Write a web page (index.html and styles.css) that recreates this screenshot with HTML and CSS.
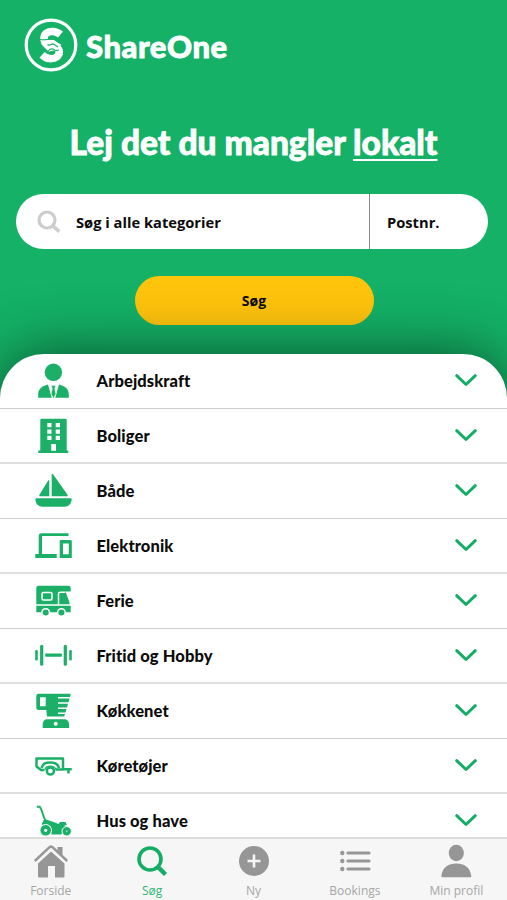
FILE: index.html
```html
<!DOCTYPE html>
<html lang="da">
<head>
  <meta charset="UTF-8">
  <meta name="viewport" content="width=device-width, initial-scale=1.0">
  <title>ShareOne</title>
  <link rel="stylesheet" href="styles.css">
</head>

<body>
  <header class="hero">
    <div class="logo">
      <svg class="logo-mark" viewBox="0 0 54 54">
        <circle cx="27" cy="27" r="24.8" fill="none" stroke="#fff" stroke-width="3.2"/>
        <path d="M36.500 16.500C32 12.800 25.500 12.500 22 15.500C19 18.500 19.500 22.500 22.500 24.500C27 27.500 34.500 28 35.300 33.500C35.500 38.500 31 40.700 27 40.700C23.500 40.700 20.500 39 18 36.800" fill="none" stroke="#fff" stroke-width="7.600"/>
        <path d="M16.500 22L30 21.500L37 26.500L36 31.500L29 32.500L24 34L18 28.500Z" fill="#fff"/>
        <path d="M15.500 21.500C21 22.500 26 20.500 30 21.500C33 22.500 33.500 25 38 26" fill="none" stroke="#14b166" stroke-width="1.100"/>
        <path d="M17 27C20 29.500 21.500 32 24 33.500C26 30 29 30.500 31.500 32.500L35 32M23.500 26.500C25.500 28.500 27.500 25.500 29.500 26L34 29" fill="none" stroke="#14b166" stroke-width="1.200"/>
      </svg>
      <span class="logo-text">ShareOne</span>
    </div>

    <h1>Lej det du mangler <span class="underline">lokalt</span></h1>

    <div class="search">
      <div class="search-what">
        <svg class="search-icon" viewBox="0 0 24 24">
          <circle cx="10" cy="10" r="8" fill="none" stroke="#ccc" stroke-width="3.2"/>
          <path d="M16 16L22.300 21.700" stroke="#ccc" stroke-width="3.600"/>
        </svg>
        <span>Søg i alle kategorier</span>
      </div>
      <div class="search-zip">Postnr.</div>
    </div>

    <button class="search-btn">Søg</button>
  </header>

  <main class="sheet">
    <div class="row">
      <svg class="icon" viewBox="0 0 40 40">
        <circle cx="19.400" cy="11.300" r="8.700"/>
        <path d="M4.200 36.800V33.500C4.200 28 8 25 14 23.500L17.800 36.800ZM34.800 36.800V33.500C34.800 28 31 25 25 23.500L21.200 36.800Z"/>
        <path d="M17 24.300H22L20.800 27.500L22 33L19.500 37.500L17 33L18.200 27.500Z" stroke="#fff" stroke-width=".7"/>
      </svg>
      <span class="name">Arbejdskraft</span>
      <svg class="chevron" viewBox="0 0 24 14"><path d="M2.700 2.700L12 11.500L21.300 2.700"/></svg>
    </div>
    <div class="row">
      <svg class="icon" viewBox="0 0 40 40">
        <path fill-rule="evenodd" d="M7.500 2.700H31.500Q32.700 2.700 32.700 4V34.500H34.300V37H4.300V34.500H6.300V4Q6.300 2.700 7.500 2.700ZM13.300 7V11.300H17.500V7ZM21.700 7V11.300H26V7ZM13.300 13.400V17.700H17.500V13.400ZM21.700 13.400V17.700H26V13.400ZM13.300 19.800V24.100H17.500V19.800ZM21.700 19.800V24.100H26V19.800ZM17.200 28V34.700H22V28Z"/>
      </svg>
      <span class="name">Boliger</span>
      <svg class="chevron" viewBox="0 0 24 14"><path d="M2.700 2.700L12 11.500L21.300 2.700"/></svg>
    </div>
    <div class="row">
      <svg class="icon" viewBox="0 0 40 40">
        <path d="M17.700 3.200Q18.200 2.200 19 3.200L33.700 24Q34 25.300 33 25.300H17.700ZM15.300 9.500V25.300H6Q4.800 25.300 5.300 24L14.300 9.300ZM2.300 27.300H36.700Q38 27.300 37.700 29Q36.500 35.700 30.500 35.700H8.500Q2.500 35.700 1.300 29Q1.200 27.300 2.300 27.300Z"/>
      </svg>
      <span class="name">Både</span>
      <svg class="chevron" viewBox="0 0 24 14"><path d="M2.700 2.700L12 11.500L21.300 2.700"/></svg>
    </div>
    <div class="row">
      <svg class="icon" viewBox="0 0 40 40">
        <path d="M34.500 7.300V10H8V28H22.700V32H1.300V28H4.700V10Q4.700 7.300 7.500 7.300Z"/>
        <path fill-rule="evenodd" d="M27 14H36.500Q37.800 14 37.800 15.300V32H25.700V15.300Q25.700 14 27 14ZM29 17.500V28.300H34.800V17.500Z"/>
      </svg>
      <span class="name">Elektronik</span>
      <svg class="chevron" viewBox="0 0 24 14"><path d="M2.700 2.700L12 11.500L21.300 2.700"/></svg>
    </div>
    <div class="row">
      <svg class="icon" viewBox="0 0 40 40">
        <path d="M4.300 4.700H34.500Q36.700 4.700 36.700 7.500V10.500H31.500L35.500 21.500V23.300H2.300V6.700Q2.300 4.700 4.300 4.700ZM2.300 24.700H36.700V31.300H2.300Z"/>
        <rect x="8" y="11.500" width="10" height="7.500" rx="1.500" fill="none" stroke="#fff" stroke-width="1.500"/>
        <path d="M24.500 23.500V13Q24.500 11.200 26.500 11.200H31.500" fill="none" stroke="#fff" stroke-width="1.500"/>
        <g stroke="#fff" stroke-width="1.600"><circle cx="11.700" cy="31.500" r="3.800"/><circle cx="27.400" cy="31.500" r="3.800"/></g>
      </svg>
      <span class="name">Ferie</span>
      <svg class="chevron" viewBox="0 0 24 14"><path d="M2.700 2.700L12 11.500L21.300 2.700"/></svg>
    </div>
    <div class="row">
      <svg class="icon" viewBox="0 0 40 40">
        <rect x="1.200" y="14" width="2.600" height="10.500" rx="1.200"/>
        <rect x="6.100" y="8.700" width="3.200" height="21" rx="1.500"/>
        <rect x="11.200" y="17.500" width="16.600" height="3.300" rx=".8"/>
        <rect x="29.700" y="8.700" width="3.200" height="21" rx="1.500"/>
        <rect x="35.200" y="14" width="2.600" height="10.500" rx="1.200"/>
      </svg>
      <span class="name">Fritid og Hobby</span>
      <svg class="chevron" viewBox="0 0 24 14"><path d="M2.700 2.700L12 11.500L21.300 2.700"/></svg>
    </div>
    <div class="row">
      <svg class="icon" viewBox="0 0 40 40">
        <path fill-rule="evenodd" d="M4.500 2.800H36.700L36 6H24V7.500H35.500L34.500 11.300H24V12.800H34L33 16.500H24V18H32.500L31.500 21.500H24V23H31L30.300 25.500H13L12.300 19H5Q2.300 19 2.300 16.500V5Q2.300 2.800 4.500 2.800ZM6 6.300V15.300H11.700V6.300Z"/>
        <path fill-rule="evenodd" d="M12.500 28.300H31Q35 29 35 33.500V37H8.700V33.500Q8.700 29 12.500 28.300ZM21.700 30.700A2 2 0 1 0 21.700 34.700A2 2 0 1 0 21.700 30.700Z"/>
      </svg>
      <span class="name">Køkkenet</span>
      <svg class="chevron" viewBox="0 0 24 14"><path d="M2.700 2.700L12 11.500L21.300 2.700"/></svg>
    </div>
    <div class="row">
      <svg class="icon" viewBox="0 0 40 40">
        <g fill="none" stroke="#1caf68" stroke-width="2.500" stroke-linejoin="round">
          <path d="M10.500 24H7L2.500 20.500V12.500H29V23.500H21.500M29 23.300H37.700M34.500 23.500V27.500"/>
          <path d="M7.500 22C9 17 12 16.500 16.300 16.500C20.500 16.500 24 17.500 25 22"/>
          <circle cx="16.400" cy="25" r="3.600"/>
          <path d="M11 23.500C12 19 20.500 19 21.800 23.500" stroke-width="1.400"/>
        </g>
      </svg>
      <span class="name">Køretøjer</span>
      <svg class="chevron" viewBox="0 0 24 14"><path d="M2.700 2.700L12 11.500L21.300 2.700"/></svg>
    </div>
    <div class="row">
      <svg class="icon" viewBox="0 0 40 40">
        <path d="M2.800 5.700H5.700L7 8L11 19L9.500 22" fill="none" stroke="#1caf68" stroke-width="1.900"/>
        <path d="M10.500 18L21 21.500L24.500 23L26 21H31.500L33 24L30 24.500L34 26L27 33.500H17.500L16.500 25L7.500 23.500Z"/>
        <g stroke="#fff" stroke-width="1"><circle cx="11.700" cy="29.300" r="5.800"/><circle cx="32.700" cy="30.300" r="4.700"/></g>
        <circle cx="11.700" cy="29.300" r="1.600" fill="#fff"/><circle cx="32.700" cy="30.300" r="1" fill="#8bd5ae"/>
      </svg>
      <span class="name">Hus og have</span>
      <svg class="chevron" viewBox="0 0 24 14"><path d="M2.700 2.700L12 11.500L21.300 2.700"/></svg>
    </div>
  </main>

  <nav class="tabs">
    <div class="tab">
      <svg viewBox="0 0 36 36">
        <path d="M24.500 4H29.500V13L24.500 8.500ZM18 8.500L31.500 20.500V33.500Q31.500 34.500 30.500 34.500H22V23H15V34.500H6Q5 34.500 5 33.500V20.500Z"/>
        <path d="M1.800 19.300L16.500 5.500Q18 4.300 19.500 5.500L34.200 19.300" fill="none" stroke="#f6f6f6" stroke-width="3.600"/>
        <path d="M1.800 18L16.500 4.200Q18 3 19.500 4.200L34.200 18" fill="none" stroke="#969696" stroke-width="2.500"/>
      </svg>
      <span>Forside</span>
    </div>
    <div class="tab active">
      <svg viewBox="0 0 36 36">
        <circle cx="16" cy="16" r="11" fill="none" stroke="#14ad65" stroke-width="3.600"/>
        <path d="M24 24L31.500 31.500" stroke="#14ad65" stroke-width="4.400"/>
      </svg>
      <span>Søg</span>
    </div>
    <div class="tab">
      <svg viewBox="0 0 36 36">
        <circle cx="18" cy="18" r="15"/>
        <path d="M18 11.500V24.500M11.500 18H24.500" stroke="#f6f6f6" stroke-width="2.600"/>
      </svg>
      <span>Ny</span>
    </div>
    <div class="tab">
      <svg viewBox="0 0 36 36">
        <circle cx="5.300" cy="10" r="2.200"/><circle cx="5.300" cy="18" r="2.200"/><circle cx="5.300" cy="26" r="2.200"/>
        <path d="M11 10H32M11 18H32M11 26H32" stroke="#969696" stroke-width="3.200" stroke-linecap="round"/>
      </svg>
      <span>Bookings</span>
    </div>
    <div class="tab">
      <svg viewBox="0 0 36 36">
        <ellipse cx="18.300" cy="10" rx="7.600" ry="8.200"/>
        <path d="M3.300 33C4.500 24 10.500 20.500 18.300 20.500S32 24 33.300 33Q33.300 34.200 32 34.200H4.500Q3.300 34.200 3.300 33Z"/>
      </svg>
      <span>Min profil</span>
    </div>
  </nav>
</body>
</html>
```
FILE: styles.css
```css
* {
  box-sizing: border-box;
}

body {
  margin: 0;
  height: 900px;
  display: flex;
  flex-direction: column;
  overflow: hidden;
  background: #14b166;
  font-family: "Open Sans", sans-serif;
  font-variant-ligatures: none;
  color: #0c0c0c;
}

.hero {
  height: 354px;
  flex: none;
  display: flex;
  flex-direction: column;
  align-items: center;
  padding: 18px 19px 0 15px;
}

.logo {
  align-self: flex-start;
  display: flex;
  align-items: center;
  height: 54px;
  margin-left: 9px;
  gap: 8px;
  color: #fff;
}

.logo-mark {
  width: 54px;
  height: 54px;
}

.logo-text {
  padding-top: 2px;
  font-family: Lato, sans-serif;
  font-weight: 900;
  font-size: 31px;
  letter-spacing: 0.55px;
  -webkit-text-stroke: 0.8px #fff;
}

h1 {
  margin: 47px 0 0 4px;
  height: 46px;
  line-height: 46px;
  font-family: Lato, sans-serif;
  font-weight: 900;
  font-size: 33.5px;
  -webkit-text-stroke: 0.8px #fff;
  color: #fff;
  white-space: nowrap;
}

.underline {
  text-decoration: underline;
  text-decoration-thickness: 2px;
  text-underline-offset: 4px;
  text-decoration-skip-ink: none;
}

.search {
  display: flex;
  width: 472px;
  height: 55px;
  margin-top: 29px;
  margin-left: 1px;
  flex: none;
  background: #fff;
  border-radius: 28px;
  font-size: 14.7px;
  font-weight: 700;
}

.search-what {
  width: 354px;
  display: flex;
  align-items: center;
  gap: 15px;
  padding-left: 21px;
  border-right: 1px solid #888;
}

.search-icon {
  width: 24px;
  height: 24px;
}

.search-zip {
  display: flex;
  align-items: center;
  padding: 0 0 0 17px;
}

.search-btn {
  width: 239px;
  height: 49px;
  margin-top: 27px;
  margin-left: 5px;
  flex: none;
  border: none;
  border-radius: 25px;
  background: #ffc40c;
  font: 700 14px "Open Sans", sans-serif;
  color: #0c0c0c;
}

.sheet {
  position: relative;
  flex: 1;
  min-height: 0;
  background: #fff;
  border-radius: 44px 44px 0 0;
  box-shadow: 0 0 60px rgba(0, 0, 0, 0.55);
}

.row {
  display: flex;
  align-items: center;
  height: 55px;
  padding: 0 29px 0 34px;
  border-bottom: 1px solid #ccc;
}

.row:nth-child(even) {
  border-bottom: 2px solid #e0e0e0;
}

.icon {
  width: 40px;
  height: 40px;
  fill: #1caf68;
}

.name {
  flex: 1;
  margin-left: 22.5px;
  font-family: Lato, sans-serif;
  font-weight: 900;
  font-size: 16.5px;
  letter-spacing: 0.1px;
}

.chevron {
  width: 24px;
  height: 14px;
  margin-top: -2px;
  fill: none;
  stroke: #14ad65;
  stroke-width: 3;
  stroke-linecap: round;
  stroke-linejoin: round;
}

.tabs {
  position: relative;
  display: flex;
  height: 63px;
  flex: none;
  background: #f6f6f6;
  border-top: 2px solid #dcdcdc;
}

.tab {
  flex: 1;
  display: flex;
  flex-direction: column;
  align-items: center;
  padding-top: 4px;
  font-size: 12px;
  line-height: 16px;
  color: #a6a6a6;
}

.tab svg {
  width: 36px;
  height: 36px;
  margin-bottom: 4px;
  fill: #969696;
}

.tab.active {
  color: #2eb877;
}
```
